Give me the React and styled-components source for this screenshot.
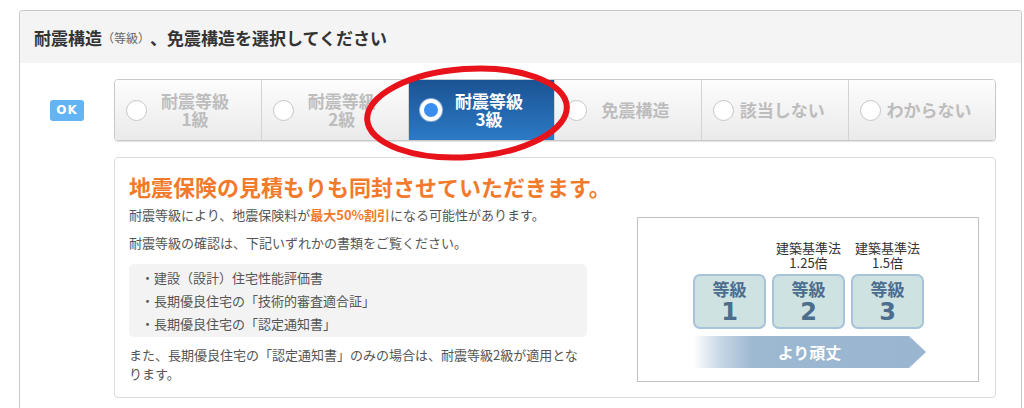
import React from "react";
import styled, { createGlobalStyle } from "styled-components";

const GlobalStyle = createGlobalStyle`
  body {
    margin: 0;
    background: #fff;
    font-family: "Noto Sans CJK JP", "Noto Sans", sans-serif;
    color: #555;
  }
`;

const Card = styled.section`
  box-sizing: border-box;
  width: 1003px;
  height: 398px;
  margin: 10px 0 0 19px;
  border: 1px solid #c8c8c8;
  border-bottom: none;
  border-radius: 4px 4px 0 0;
  overflow: hidden;
`;

const Header = styled.h2`
  margin: 0;
  height: 52px;
  display: flex;
  align-items: center;
  padding-left: 14px;
  background: #f4f4f4;
  color: #333;
  font-size: 17px;
  font-weight: bold;
`;

const HeaderSub = styled.span`
  font-size: 12px;
  font-weight: normal;
  color: #666;
`;

const Body = styled.div`
  display: grid;
  grid-template-columns: 94px 1fr;
  row-gap: 16px;
  padding: 16px 25px 0 0;
`;

const LabelCell = styled.div`
  display: flex;
  align-items: center;
  justify-content: center;
`;

const Badge = styled.span`
  display: inline-flex;
  align-items: center;
  justify-content: center;
  width: 34px;
  height: 21px;
  border-radius: 3px;
  background: #62b4f4;
  color: #fff;
  font-family: "DejaVu Sans", sans-serif;
  font-size: 12px;
  font-weight: bold;
  letter-spacing: 1px;
`;

const GroupWrap = styled.div`
  position: relative;
`;

const ButtonGroup = styled.div`
  display: flex;
  height: 62px;
  box-sizing: border-box;
  border: 1px solid #c9c9c9;
  border-radius: 4px;
  overflow: hidden;
  box-shadow: 0 1px 1px rgba(0, 0, 0, 0.12);
`;

const Option = styled.div`
  flex: 1;
  display: flex;
  align-items: center;
  background: ${(p) =>
    p.$active
      ? "linear-gradient(#1b5393, #2c7ac5)"
      : "linear-gradient(#fdfdfd, #eaeaea)"};
  color: ${(p) => (p.$active ? "#fff" : "#bdbdbd")};
  & + & {
    border-left: 1px solid #d3d3d3;
  }
`;

const Radio = styled.span`
  flex: none;
  box-sizing: border-box;
  width: ${(p) => (p.$active ? "22px" : "21px")};
  height: ${(p) => (p.$active ? "22px" : "21px")};
  margin-left: 11px;
  border-radius: 50%;
  background: ${(p) => (p.$active ? "#3a8ef0" : "#fff")};
  border: ${(p) => (p.$active ? "4px solid #fff" : "1px solid #c6c6c6")};
  box-shadow: ${(p) => (p.$active ? "0 0 0 1px #8fb0d8" : "none")};
`;

const OptionText = styled.span`
  flex: 1;
  padding-right: 18px;
  text-align: center;
  font-size: 17px;
  font-weight: bold;
  line-height: 18px;
`;

const Annotation = styled.svg`
  position: absolute;
  left: 238px;
  top: -22px;
  pointer-events: none;
`;

const InfoBox = styled.div`
  box-sizing: border-box;
  height: 241px;
  border: 1px solid #dcdcdc;
  border-radius: 4px;
  padding: 13px 16px 0 14px;
`;

const Title = styled.h3`
  margin: 0;
  color: #f27a2b;
  font-size: 22px;
  font-weight: bold;
  line-height: 30px;
`;

const Row = styled.div`
  display: flex;
  justify-content: space-between;
  align-items: flex-start;
`;

const LeftCol = styled.div`
  width: 458px;
`;

const Para = styled.p`
  margin: ${(p) => p.$top || 0}px 0 0;
  font-size: 13px;
  line-height: ${(p) => p.$lh || 20}px;
  color: #555;
`;

const Hl = styled.span`
  color: #f27a2b;
  font-weight: bold;
`;

const DocList = styled.ul`
  list-style: none;
  margin: 11px 0 0;
  padding: 2px 0 2px 12px;
  background: #f3f3f3;
  border-radius: 5px;
  font-size: 13px;
  line-height: 23px;
  color: #555;
`;

const Diagram = styled.div`
  box-sizing: border-box;
  width: 342px;
  height: 165px;
  margin-top: 16px;
  border: 1px solid #c2c2c2;
  padding: 22px 0 0 55px;
`;

const Tiles = styled.div`
  display: grid;
  grid-template-columns: 73px 73px 73px;
  column-gap: 6px;
  row-gap: 4px;
  width: 231px;
`;

const TileLabel = styled.div`
  font-size: 13px;
  line-height: 15px;
  color: #333;
  text-align: center;
  white-space: nowrap;
`;

const Tile = styled.div`
  box-sizing: border-box;
  height: 55px;
  padding-top: 3px;
  border: 2px solid #a8c3d9;
  border-radius: 7px;
  background: #cfe2e2;
  display: flex;
  flex-direction: column;
  align-items: center;
  color: #4b6d8e;
  font-weight: bold;
`;

const TileTop = styled.span`
  font-size: 17px;
  line-height: 20px;
`;

const TileNum = styled.span`
  font-family: "DejaVu Sans", sans-serif;
  font-size: 24px;
  line-height: 26px;
`;

const Arrow = styled.div`
  width: 233px;
  height: 32px;
  margin-top: 7px;
  display: flex;
  align-items: center;
  justify-content: center;
  background: linear-gradient(to right, #fff 0%, #c6d6e5 12%, #9db8d1 26%, #99b5d0 100%);
  clip-path: polygon(0 0, calc(100% - 17px) 0, 100% 50%, calc(100% - 17px) 100%, 0 100%);
  color: #fff;
  font-size: 16px;
  font-weight: bold;
`;

const options = [
  ["耐震等級", "1級"],
  ["耐震等級", "2級"],
  ["耐震等級", "3級"],
  ["免震構造"],
  ["該当しない"],
  ["わからない"],
];

export default function App() {
  const selected = 2;
  return (
    <>
      <GlobalStyle />
      <Card>
        <Header>
          耐震構造<HeaderSub>（等級）</HeaderSub>、免震構造を選択してください
        </Header>
        <Body>
          <LabelCell>
            <Badge>OK</Badge>
          </LabelCell>
          <GroupWrap>
            <ButtonGroup>
              {options.map((lines, i) => (
                <Option key={i} $active={i === selected}>
                  <Radio $active={i === selected} />
                  <OptionText>
                    {lines.map((l, j) => (
                      <React.Fragment key={j}>
                        {j > 0 && <br />}
                        {l}
                      </React.Fragment>
                    ))}
                  </OptionText>
                </Option>
              ))}
            </ButtonGroup>
            <Annotation width="230" height="110" viewBox="0 0 230 110">
              <ellipse
                cx="115"
                cy="56"
                rx="100"
                ry="44"
                fill="none"
                stroke="#e8121b"
                strokeWidth="6"
                transform="rotate(-4 115 56)"
              />
            </Annotation>
          </GroupWrap>
          <div />
          <InfoBox>
            <Title>地震保険の見積もりも同封させていただきます。</Title>
            <Row>
              <LeftCol>
                <Para $top={4}>
                  耐震等級により、地震保険料が<Hl>最大50%割引</Hl>になる可能性があります。
                </Para>
                <Para $top={8}>耐震等級の確認は、下記いずれかの書類をご覧ください。</Para>
                <DocList>
                  <li>・建設（設計）住宅性能評価書</li>
                  <li>・長期優良住宅の「技術的審査適合証」</li>
                  <li>・長期優良住宅の「認定通知書」</li>
                </DocList>
                <Para $top={8} $lh={19}>
                  また、長期優良住宅の「認定通知書」のみの場合は、耐震等級2級が適用となります。
                </Para>
              </LeftCol>
              <Diagram>
                <Tiles>
                  <TileLabel />
                  <TileLabel>
                    建築基準法
                    <br />
                    1.25倍
                  </TileLabel>
                  <TileLabel>
                    建築基準法
                    <br />
                    1.5倍
                  </TileLabel>
                  {[1, 2, 3].map((n) => (
                    <Tile key={n}>
                      <TileTop>等級</TileTop>
                      <TileNum>{n}</TileNum>
                    </Tile>
                  ))}
                </Tiles>
                <Arrow>より頑丈</Arrow>
              </Diagram>
            </Row>
          </InfoBox>
        </Body>
      </Card>
    </>
  );
}
